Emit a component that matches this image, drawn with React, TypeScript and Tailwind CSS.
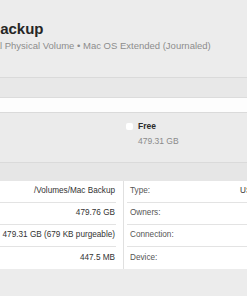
import React from "react";

const leftRows = ["/Volumes/Mac Backup", "479.76 GB", "479.31 GB (679 KB purgeable)", "447.5 MB"];
const rightRows = [
	{ label: "Type:", value: "USB External Physical Volume" },
	{ label: "Owners:", value: "" },
	{ label: "Connection:", value: "" },
	{ label: "Device:", value: "" },
];

export default function App() {
	return (
		<div className="h-[296px] w-[247px] overflow-hidden bg-[#ececec] font-['Liberation_Sans',sans-serif]">
			{/* header */}
			<div className="h-[77px] overflow-hidden whitespace-nowrap pt-[20px]">
				<h1 className="-ml-[44px] text-[15px] font-bold leading-[18px] text-[#262626]">Mac Backup</h1>
				<p className="-ml-[55px] mt-[2px] text-[9.5px] leading-[11px] text-[#8c8c8c]">
					USB External Physical Volume • Mac OS Extended (Journaled)
				</p>
			</div>

			{/* usage bar */}
			<div className="border-y border-[#dadada] bg-[#e8e8e8]">
				<div className="h-[19px]" />
				<div className="h-[15px] border-t border-[#dcdcdc] bg-[#fdfdfd]" />
			</div>

			{/* legend */}
			<div className="h-[50px] border-b border-[#dadada] bg-[#ebebeb] pl-[126px] pt-[8px]">
				<div className="flex items-center gap-[5px]">
					<span className="h-[7px] w-[7px] rounded-[2px] bg-white" />
					<span className="text-[8.5px] font-bold leading-[10px] text-[#2b2b2b]">Free</span>
				</div>
				<p className="ml-[12px] mt-[5px] text-[8.5px] leading-[10px] text-[#8a8a8a]">479.31 GB</p>
			</div>

			<div className="h-[18px] bg-[#e6e6e6]" />

			{/* info table */}
			<div className="flex bg-white">
				<div className="w-[124px] border-r border-[#e0e0e0]">
					{leftRows.map((v, i) => (
						<div key={i} className="pr-[7px]">
							<div
								className={`flex h-[22px] items-center justify-end whitespace-nowrap pr-[1px] text-[8.2px] text-[#333] ${
									i < 3 ? "border-b border-[#e3e3e3]" : ""
								}`}>
								{v}
							</div>
						</div>
					))}
				</div>
				<div className="flex-1 overflow-hidden pl-[3px]">
					{rightRows.map((r, i) => (
						<div
							key={i}
							className={`flex h-[22px] items-center whitespace-nowrap pl-[3px] text-[8.2px] ${
								i < 3 ? "border-b border-[#e3e3e3]" : ""
							}`}>
							<span className="w-[110px] shrink-0 text-[#555]">{r.label}</span>
							<span className="text-[#333]">{r.value}</span>
						</div>
					))}
				</div>
			</div>
		</div>
	);
}
